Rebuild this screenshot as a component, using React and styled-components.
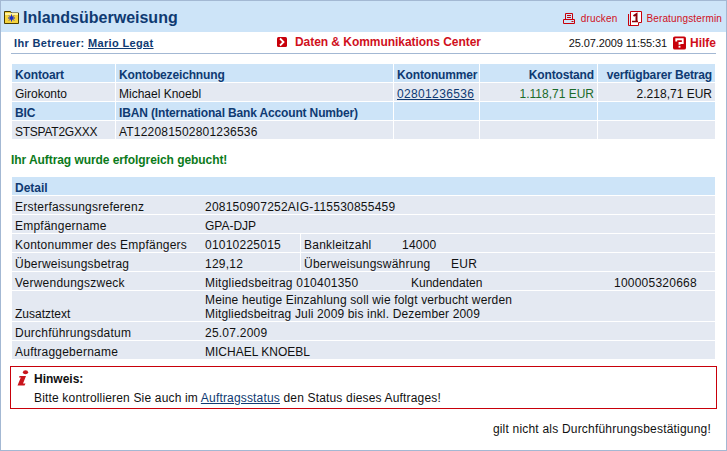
import React from "react";
import styled, { createGlobalStyle } from "styled-components";

const Global = createGlobalStyle`
  html, body { margin: 0; padding: 0; background: #fff; }
  body { font-family: "Liberation Sans", Arial, sans-serif; font-size: 12px; color: #111; }
`;

const Page = styled.div`
  width: 727px;
  height: 451px;
  box-sizing: border-box;
  border: 1px solid #a3b8d3;
  overflow: hidden;
  background: #fff;
`;

const Header = styled.div`
  height: 31px;
  background: #cde4f8;
  display: flex;
  align-items: center;
  padding: 0 4px 0 3px;
`;

const Title = styled.h1`
  flex: 1;
  margin: 2px 0 0 4px;
  font-size: 16px;
  font-weight: bold;
  color: #0f3a72;
`;

const Tool = styled.span`
  display: flex;
  align-items: center;
  gap: ${(p) => p.$gap}px;
  margin: 3px 0 0 11px;
  font-size: 10px;
  letter-spacing: 0.15px;
  color: #d0101c;
`;

const SubBar = styled.div`
  height: 21px;
  margin: 0 10px;
  border-bottom: 1px solid #a3b8d3;
  display: flex;
  align-items: center;
  padding: 0 0 0 3px;
`;

const Advisor = styled.span`
  width: 263px;
  font-weight: bold;
  font-size: 11px;
  letter-spacing: 0.35px;
  color: #0f3a72;
`;

const Link = styled.a`
  color: #0f3a72;
  text-decoration: underline;
`;

const Center = styled.span`
  flex: 1;
  display: flex;
  align-items: center;
  gap: 8px;
  font-weight: bold;
  letter-spacing: -0.05px;
  color: #d0101c;
  margin-top: -2px;
`;

const Stamp = styled.span`
  font-size: 11px;
  letter-spacing: -0.1px;
  color: #111;
  margin-right: 6px;
`;

const Help = styled.span`
  display: flex;
  align-items: center;
  gap: 4px;
  width: 43px;
  font-weight: bold;
  color: #d0101c;
`;

const Table = styled.div`
  margin: ${(p) => p.$top}px 0 0 11px;
  width: 703px;
  display: flex;
  flex-direction: column;
  gap: 1px;
`;

const Row = styled.div`
  display: flex;
  gap: 1px;
  height: 18px;
`;

const Cell = styled.div`
  flex: ${(p) => (p.$w ? `0 0 ${p.$w}px` : "1")};
  min-width: 0;
  box-sizing: border-box;
  background: ${(p) => (p.$head ? "#cde4f8" : "#e4e9f2")};
  color: ${(p) => (p.$head ? "#0f3a72" : p.$color || "#111")};
  font-weight: ${(p) => (p.$head ? "bold" : "normal")};
  text-align: ${(p) => (p.$right ? "right" : "left")};
  letter-spacing: ${(p) => (p.$head ? -0.15 : p.$track || 0)}px;
  padding: 0 3px;
  line-height: 22px;
  white-space: nowrap;
`;

const Success = styled.div`
  margin: 14px 0 0 10px;
  height: 14px;
  line-height: 14px;
  font-weight: bold;
  letter-spacing: -0.07px;
  color: #0b7a1a;
`;

const DetailRow = styled.div`
  display: flex;
  background: #e4e9f2;
  height: ${(p) => (p.$tall ? 30 : 18)}px;
  line-height: ${(p) => (p.$tall ? "14px" : "22px")};
  align-items: ${(p) => (p.$tall ? "flex-end" : "stretch")};
  letter-spacing: ${(p) => (p.$tall ? 0.15 : 0.23)}px;
  padding-left: 3px;
  white-space: nowrap;
`;

const DetailHead = styled(DetailRow)`
  background: #cde4f8;
  color: #0f3a72;
  font-weight: bold;
  letter-spacing: 0;
`;

const Label = styled.div`
  flex: 0 0 190px;
`;

const Plain = styled.span`
  letter-spacing: 0;
`;

const Divided = styled.div`
  flex: ${(p) => (p.$w ? `0 0 ${p.$w}px` : "1")};
  box-sizing: border-box;
  border-left: ${(p) => (p.$line ? "1px solid #fff" : "none")};
  padding-left: ${(p) => (p.$line ? 3 : 0)}px;
`;

const Notice = styled.div`
  margin: 7px 0 0 9px;
  width: 707px;
  height: 43px;
  box-sizing: border-box;
  border: 1px solid #c8000a;
  display: flex;
  padding: 3px 0 0 6px;
`;

const NoticeIcon = styled.div`
  flex: 0 0 17px;
`;

const NoticeBody = styled.div`
  line-height: 19px;
  letter-spacing: 0.17px;
`;

const NoticeTitle = styled.div`
  font-weight: bold;
  letter-spacing: 0;
  color: #111;
`;

const Footer = styled.div`
  margin: 13px 15px 0 0;
  text-align: right;
  letter-spacing: 0.2px;
`;

const Folder = () => (
  <svg width="15" height="14" viewBox="0 0 15 14">
    <path d="M.5 13.5V1.5h6l1 1.5h7v10.500z" fill="#f5d33c" stroke="#4a3c00" strokeWidth="1" />
    <rect x="1" y="3" width="13" height="2" fill="#fff3a0" />
    <path d="M7.500 4.500v7M4 8h7M5 5.500l5 5M10 5.500l-5 5" stroke="#1c2fc8" strokeWidth="1" />
    <circle cx="7.500" cy="8" r="1.800" fill="#1c2fc8" />
  </svg>
);

const Printer = () => (
  <svg width="12" height="11" viewBox="0 0 12 11" fill="none" stroke="#c8000a">
    <path d="M2.500 .5h7v6h-7zM4 2.500h4M4 4.500h4" />
    <path d="M.5 6.500h11v4H.5zM8.500 8.500h2" />
  </svg>
);

const Calendar = () => (
  <svg width="14" height="15" viewBox="0 0 14 15" fill="none" stroke="#c8000a">
    <path d="M2.500 .5h11v11h-3v3h-8z" fill="#fff" />
    <path d="M.5 3v11.500h8" />
    <path d="M5.500 5l3-2v7" strokeWidth="2" stroke="#8c0008" />
    <path d="M4 10.500h6" strokeWidth="1.500" stroke="#8c0008" />
  </svg>
);

const HelpIcon = () => (
  <svg width="14" height="14" viewBox="0 0 14 14">
    <rect width="14" height="14" rx="2" fill="#c8000a" />
    <path d="M3.500 5.500V3h7v4H7v2" fill="none" stroke="#fff" strokeWidth="2" />
    <rect x="6" y="10" width="2" height="2" fill="#fff" />
  </svg>
);

const Chevron = () => (
  <svg width="10" height="10" viewBox="0 0 10 10">
    <rect width="10" height="10" rx="1.500" fill="#c8000a" />
    <path d="M3 1.500l3.500 3.500-3.500 3.500" fill="none" stroke="#fff" strokeWidth="1.800" />
  </svg>
);

const InfoIcon = () => (
  <svg width="12" height="16" viewBox="0 0 12 16">
    <ellipse cx="8.500" cy="2.200" rx="2.600" ry="2" fill="#c9141c" />
    <path d="M2.500 6h6.500L6 13.500h2.500l-1 2H.5L3.800 7.500H2z" fill="#c9141c" />
  </svg>
);

const COLS = [103, 277, 85, 117];

export default function App() {
  return (
    <Page>
      <Global />
      <Header>
        <Folder />
        <Title>Inlandsüberweisung</Title>
        <Tool $gap={6}><Printer />drucken</Tool>
        <Tool $gap={4}><Calendar />Beratungstermin</Tool>
      </Header>
      <SubBar>
        <Advisor>Ihr Betreuer: <Link>Mario Legat</Link></Advisor>
        <Center><Chevron />Daten &amp; Kommunikations Center</Center>
        <Stamp>25.07.2009 11:55:31</Stamp>
        <Help><HelpIcon />Hilfe</Help>
      </SubBar>

      <Table $top={10}>
        <Row>
          <Cell $head $w={COLS[0]}>Kontoart</Cell>
          <Cell $head $w={COLS[1]}>Kontobezeichnung</Cell>
          <Cell $head $w={COLS[2]}>Kontonummer</Cell>
          <Cell $head $right $w={COLS[3]}>Kontostand</Cell>
          <Cell $head $right>verfügbarer Betrag</Cell>
        </Row>
        <Row>
          <Cell $w={COLS[0]}>Girokonto</Cell>
          <Cell $w={COLS[1]}>Michael Knoebl</Cell>
          <Cell $w={COLS[2]} $track={0.35}><Link>02801236536</Link></Cell>
          <Cell $right $w={COLS[3]} $color="#1c6b2a">1.118,71 EUR</Cell>
          <Cell $right>2.218,71 EUR</Cell>
        </Row>
        <Row>
          <Cell $head $w={COLS[0]}>BIC</Cell>
          <Cell $head $w={COLS[1]}>IBAN (International Bank Account Number)</Cell>
          <Cell $head $w={COLS[2]} />
          <Cell $head $w={COLS[3]} />
          <Cell $head />
        </Row>
        <Row>
          <Cell $w={COLS[0]} $track={-0.25}>STSPAT2GXXX</Cell>
          <Cell $w={COLS[1]} $track={0.2}>AT122081502801236536</Cell>
          <Cell $w={COLS[2]} />
          <Cell $w={COLS[3]} />
          <Cell />
        </Row>
      </Table>

      <Success>Ihr Auftrag wurde erfolgreich gebucht!</Success>

      <Table $top={10}>
        <DetailHead>Detail</DetailHead>
        <DetailRow><Label>Ersterfassungsreferenz</Label>208150907252AIG-115530855459</DetailRow>
        <DetailRow><Label>Empfängername</Label><Plain>GPA-DJP</Plain></DetailRow>
        <DetailRow>
          <Label>Kontonummer des Empfängers</Label>
          <Divided $w={95}>01010225015</Divided>
          <Divided $w={102} $line>Bankleitzahl</Divided>
          <Divided>14000</Divided>
        </DetailRow>
        <DetailRow>
          <Label>Überweisungsbetrag</Label>
          <Divided $w={95}>129,12</Divided>
          <Divided $w={151} $line>Überweisungswährung</Divided>
          <Divided>EUR</Divided>
        </DetailRow>
        <DetailRow>
          <Label>Verwendungszweck</Label>
          <Divided $w={206}>Mitgliedsbeitrag 010401350</Divided>
          <Divided $w={203}><Plain>Kundendaten</Plain></Divided>
          <Divided>100005320668</Divided>
        </DetailRow>
        <DetailRow $tall>
          <Label><Plain>Zusatztext</Plain></Label>
          <div>
            Meine heutige Einzahlung soll wie folgt verbucht werden<br />
            Mitgliedsbeitrag Juli 2009 bis inkl. Dezember 2009
          </div>
        </DetailRow>
        <DetailRow><Label>Durchführungsdatum</Label>25.07.2009</DetailRow>
        <DetailRow><Label>Auftraggebername</Label><Plain>MICHAEL KNOEBL</Plain></DetailRow>
      </Table>

      <Notice>
        <NoticeIcon><InfoIcon /></NoticeIcon>
        <NoticeBody>
          <NoticeTitle>Hinweis:</NoticeTitle>
          Bitte kontrollieren Sie auch im <Link>Auftragsstatus</Link> den Status dieses Auftrages!
        </NoticeBody>
      </Notice>

      <Footer>gilt nicht als Durchführungsbestätigung!</Footer>
    </Page>
  );
}
